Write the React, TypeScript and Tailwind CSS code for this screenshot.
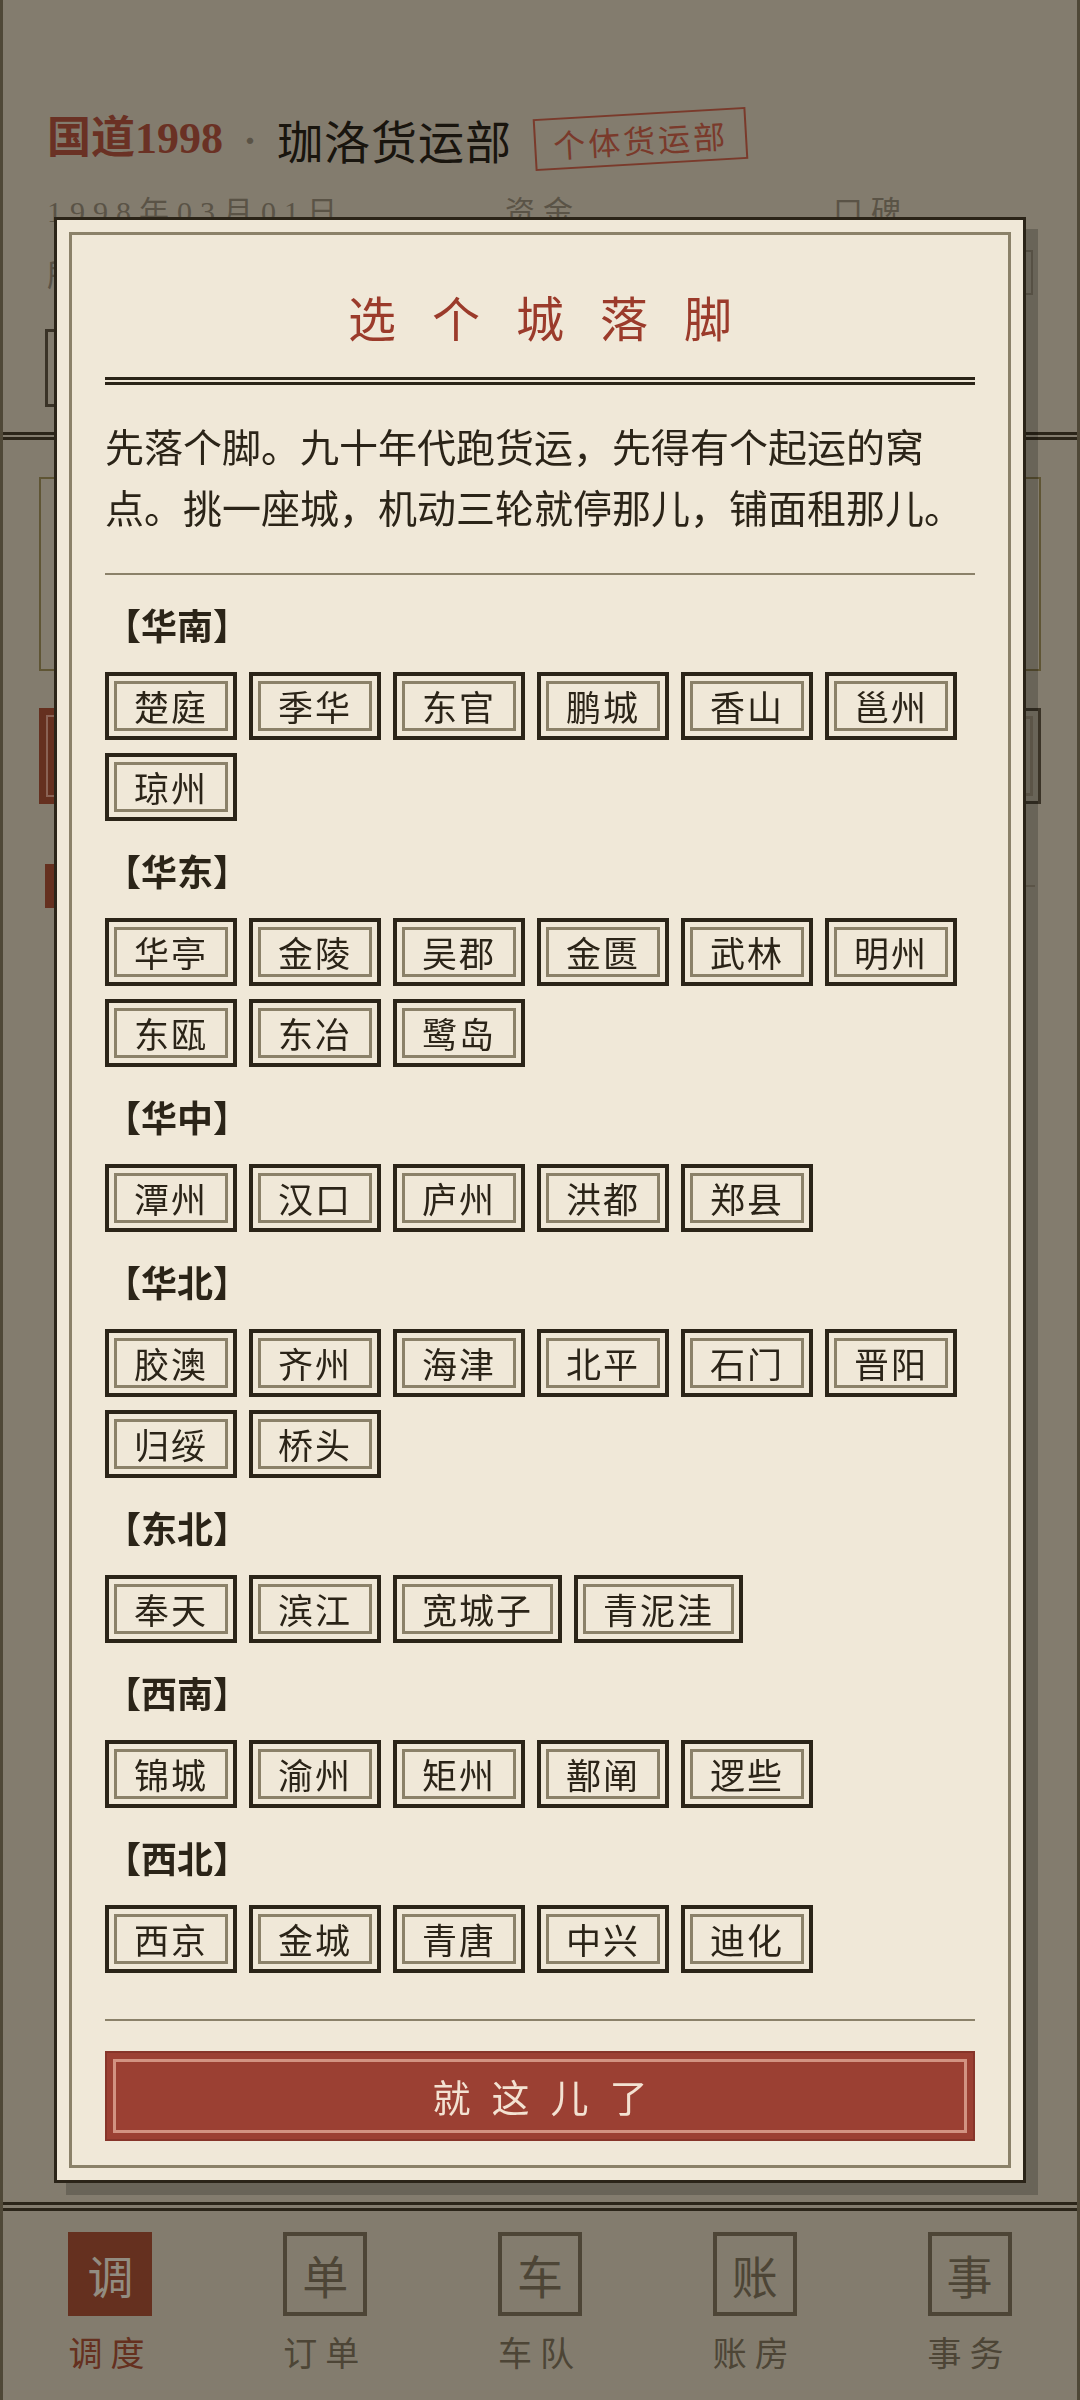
import { useState } from "react";

// Opening screen of the game: the dispatch page sits behind a modal that asks
// the player to pick a home city. Page colours are the undimmed originals; the
// backdrop darkens them.

const REGIONS: { name: string; cities: string[] }[] = [
  { name: "华南", cities: ["楚庭", "季华", "东官", "鹏城", "香山", "邕州", "琼州"] },
  { name: "华东", cities: ["华亭", "金陵", "吴郡", "金匮", "武林", "明州", "东瓯", "东冶", "鹭岛"] },
  { name: "华中", cities: ["潭州", "汉口", "庐州", "洪都", "郑县"] },
  { name: "华北", cities: ["胶澳", "齐州", "海津", "北平", "石门", "晋阳", "归绥", "桥头"] },
  { name: "东北", cities: ["奉天", "滨江", "宽城子", "青泥洼"] },
  { name: "西南", cities: ["锦城", "渝州", "矩州", "鄯阐", "逻些"] },
  { name: "西北", cities: ["西京", "金城", "青唐", "中兴", "迪化"] },
];

const NAV = [
  { glyph: "调", label: "调度" },
  { glyph: "单", label: "订单" },
  { glyph: "车", label: "车队" },
  { glyph: "账", label: "账房" },
  { glyph: "事", label: "事务" },
];

function Header() {
  return (
    <header className="px-[44px] pt-[104px]">
      <div className="flex h-[70px] items-center">
        <span className="font-['Liberation_Serif','Noto_Sans_CJK_SC',serif] text-[44px] leading-none font-bold text-[#b1523c]">
          国道1998
        </span>
        <span className="w-[54px] text-center text-[30px] leading-none text-[#968a75]">·</span>
        <span className="text-[46px] leading-none tracking-[1px] text-[#2b2418]">珈洛货运部</span>
        <span className="ml-[22px] flex h-[52px] rotate-[-3.3deg] items-center border-2 border-[#cb6149] px-[17px] text-[32px] leading-none tracking-[3px] text-[#cb6149]">
          个体货运部
        </span>
      </div>

      <div className="mt-[20px] flex font-['Liberation_Serif','Noto_Sans_CJK_SC',serif] text-[30px] leading-[36px] tracking-[8px] text-[#968a75]">
        <span className="w-[458px]">1998年03月01日</span>
        <span className="w-[328px]">资金</span>
        <span className="flex-1">口碑</span>
      </div>

      <div className="mt-[20px] flex h-[44px] items-center text-[32px] text-[#968a75]">
        <span className="w-[786px]">所</span>
        <div className="h-[45px] flex-1 border-2 border-[#b3a78e]" />
      </div>

      <div className="mt-[35px] -ml-[2px] h-[78px] w-[320px] border-[3px] border-[#615541]" />
    </header>
  );
}

function DispatchPage() {
  return (
    <main className="px-[36px]">
      <div className="mt-[37px] h-[194px] border-2 border-[#9e8e58]" />

      <div className="mt-[37px] flex h-[96px] gap-[16px]">
        <div className="flex flex-1 bg-[#a85034] p-[7px]">
          <div className="flex-1 border-2 border-[#e6a58e]" />
        </div>
        {[0, 1].map((k) => (
          <div key={k} className="flex flex-1 border-[3px] border-[#615541] p-[5px]">
            <div className="flex-1 border-[3px] border-[#bcaf94]" />
          </div>
        ))}
      </div>

      <div className="mt-[60px] flex h-[44px] items-center">
        <div className="ml-[6px] h-full w-[150px] bg-[#a85034]" />
        <div className="mr-[6px] h-[2px] flex-1 bg-[#bcaf94]" />
      </div>
    </main>
  );
}

function BottomNav({ active }: { active: number }) {
  return (
    <nav>
      <div className="h-[9px] border-y-[3px] border-[#493e2a]" />
      <div className="grid grid-cols-5 pt-[21px] pb-[26px]">
        {NAV.map((item, i) => {
          const on = i === active;
          return (
            <div key={item.label} className="flex flex-col items-center">
              <div
                className={
                  on
                    ? "flex h-[84px] w-[84px] items-center justify-center bg-[#a85034] text-[46px] text-[#f3e9d8]"
                    : "flex h-[84px] w-[84px] items-center justify-center border-4 border-[#80735a] text-[46px] text-[#80735a]"
                }
              >
                {item.glyph}
              </div>
              <span
                className={
                  on
                    ? "mt-[14px] text-[34px] leading-[44px] tracking-[8px] text-[#a85034]"
                    : "mt-[14px] text-[34px] leading-[44px] tracking-[8px] text-[#80735a]"
                }
              >
                {item.label}
              </span>
            </div>
          );
        })}
      </div>
    </nav>
  );
}

function CityButton({
  name,
  selected,
  onPick,
}: {
  name: string;
  selected: boolean;
  onPick: () => void;
}) {
  return (
    <button
      onClick={onPick}
      className={
        selected
          ? "border-4 border-[#9b3b2b] bg-[#e6d9c0] p-[5px]"
          : "border-4 border-[#2b2418] p-[5px]"
      }
    >
      <div className="border-[3px] border-[#8b8169] px-[17px] text-[35px] leading-[44px] tracking-[2px] text-[#2b2418]">
        {name}
      </div>
    </button>
  );
}

function PickCityModal() {
  const [city, setCity] = useState<string | null>(null);

  return (
    <div className="fixed inset-0 flex items-center justify-center">
      <div className="w-[972px] border-[3px] border-[#2b2418] bg-[#f0e8d8] p-3 shadow-[12px_12px_0_rgba(0,0,0,0.2)]">
        <div className="border-[3px] border-[#8b8169] px-[33px] pt-[45px] pb-[24px]">
          <h2 className="pl-[36px] text-center text-[48px] leading-[72px] tracking-[36px] text-[#9b3b2b]">
            选个城落脚
          </h2>
          <div className="mt-[25px] h-[8px] border-y-[3px] border-[#2b2418]" />
          <p className="mt-[30px] text-[39px] leading-[61px] text-[#2b2418]">
            先落个脚。九十年代跑货运，先得有个起运的窝点。挑一座城，机动三轮就停那儿，铺面租那儿。
          </p>
          <div className="mt-[36px] h-[2px] bg-[#8b8169]" />

          <div className="mt-[22px] flex flex-col gap-[22px]">
            {REGIONS.map((r) => (
              <section key={r.name}>
                <h3 className="text-[36px] leading-[54px] font-bold text-[#2b2418]">【{r.name}】</h3>
                <div className="mt-[21px] flex flex-wrap gap-x-3 gap-y-[13px]">
                  {r.cities.map((c) => (
                    <CityButton key={c} name={c} selected={city === c} onPick={() => setCity(c)} />
                  ))}
                </div>
              </section>
            ))}
          </div>

          <div className="mt-[46px] h-[2px] bg-[#8b8169]" />
          <button className="mt-[30px] flex h-[90px] w-full border-2 border-[#87352a] bg-[#9b4033] p-[6px]">
            <div className="flex-1 border-[3px] border-[#d29382] pl-[21px] text-center text-[38px] leading-[68px] tracking-[21px] text-[#f3e2d2]">
              就这儿了
            </div>
          </button>
        </div>
      </div>
    </div>
  );
}

export default function App() {
  return (
    <div className="min-h-screen bg-[#dacfb7] font-['Noto_Sans_CJK_SC',sans-serif]">
      <div className="flex min-h-screen flex-col border-x-[3px] border-[#84785d]">
        <Header />
        <div className="mt-[25px] h-[8px] border-y-[3px] border-[#493e2a]" />
        <DispatchPage />
        <div className="flex-1" />
        <BottomNav active={0} />
      </div>
      <div className="fixed inset-0 bg-black/40" />
      <PickCityModal />
    </div>
  );
}
